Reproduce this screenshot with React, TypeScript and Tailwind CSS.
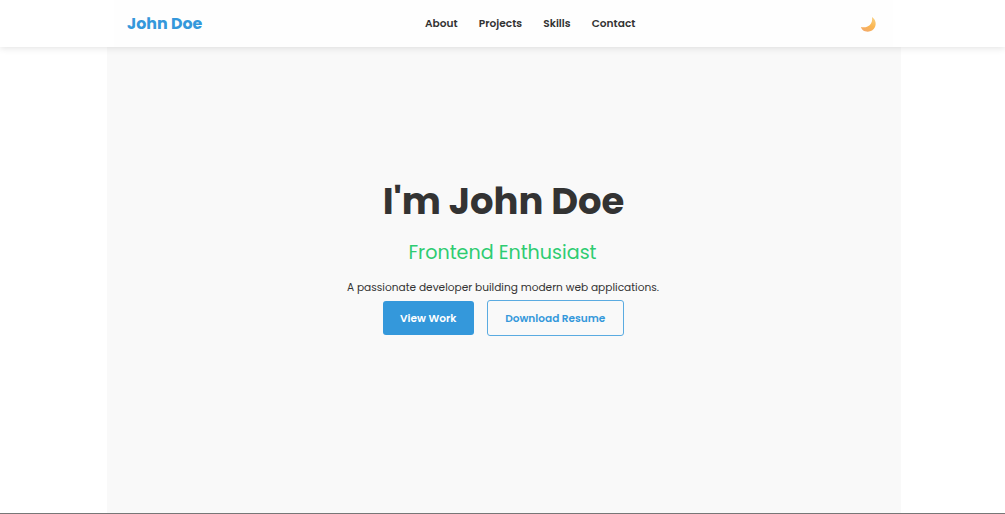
import React from 'react';

const links = [
  { label: 'About', href: '#about' },
  { label: 'Projects', href: '#projects' },
  { label: 'Skills', href: '#skills' },
  { label: 'Contact', href: '#contact' },
];

function MoonIcon() {
  return (
    <svg width="17" height="17" viewBox="0 0 17 17" aria-hidden="true">
      <defs>
        <linearGradient id="moon" x1="0.8" y1="0" x2="0.3" y2="1">
          <stop offset="0" stopColor="#f9cf80" />
          <stop offset="0.55" stopColor="#fbb650" />
          <stop offset="1" stopColor="#f3aa6a" />
        </linearGradient>
      </defs>
      <path
        d="M12 1.1C15.2 3.2 16.7 7.4 15 11.1C13.2 15 9 16.5 5 15.2C3 14.5 1.6 13 .9 10.9C4.2 11.8 7.4 11.2 9.6 9.3C11.9 7.3 12.5 4.3 12 1.1Z"
        fill="url(#moon)"
      />
    </svg>
  );
}

function Header() {
  return (
    <header className="relative z-10 h-[46.5px] bg-white pl-[2px] shadow-[0_1px_7px_rgba(0,0,0,0.12)]">
      <nav className="mx-auto flex h-full w-[779px] items-center bg-[#fefefe] pl-[13px]">
        <a href="#" className="w-[298px] pt-px whitespace-nowrap text-[15.84px] font-bold text-[#3498db]">
          John Doe
        </a>
        <ul className="flex gap-[21.2px] pt-[1.5px] text-[10.6px] font-semibold text-[#333]">
          {links.map((link) => (
            <li key={link.label}>
              <a href={link.href} className="whitespace-nowrap">{link.label}</a>
            </li>
          ))}
        </ul>
        <button type="button" aria-label="Toggle theme" className="mr-4 ml-auto pt-[3px]">
          <MoonIcon />
        </button>
      </nav>
    </header>
  );
}

function Hero() {
  return (
    <div className="flex flex-1 justify-center pl-[2px]">
      <section className="flex w-[794px] flex-col items-center bg-[#f9f9f9] pt-[130.5px] text-[#333]">
        <h1 className="whitespace-nowrap text-[36.96px] leading-[48px] font-bold">I'm John Doe</h1>
        <h2 className="mt-4 mr-[2px] whitespace-nowrap text-[19.1px] leading-6 text-[#2ecc71]">Frontend Enthusiast</h2>
        <p className="mt-[14px] mr-px whitespace-nowrap text-[10.6px] leading-[18px]">
          A passionate developer building modern web applications.
        </p>
        <div className="mt-[3px] flex items-center gap-[13.5px] text-[10.56px] font-semibold">
          <a
            href="#projects"
            className="flex h-[34px] w-[91px] items-center justify-center rounded-[3px] bg-[#3498db] pt-[2px] whitespace-nowrap text-white"
          >
            View Work
          </a>
          <a
            href="#resume"
            className="flex h-9 w-[137px] items-center justify-center rounded-[3px] border border-[#5aabe1] pt-[2px] pr-px whitespace-nowrap text-[#3498db]"
          >
            Download Resume
          </a>
        </div>
      </section>
    </div>
  );
}

export default function App() {
  return (
    <div className="flex h-[514px] flex-col overflow-hidden border-b border-[#777] bg-white font-['Poppins','Inter',sans-serif]">
      <Header />
      <Hero />
    </div>
  );
}
